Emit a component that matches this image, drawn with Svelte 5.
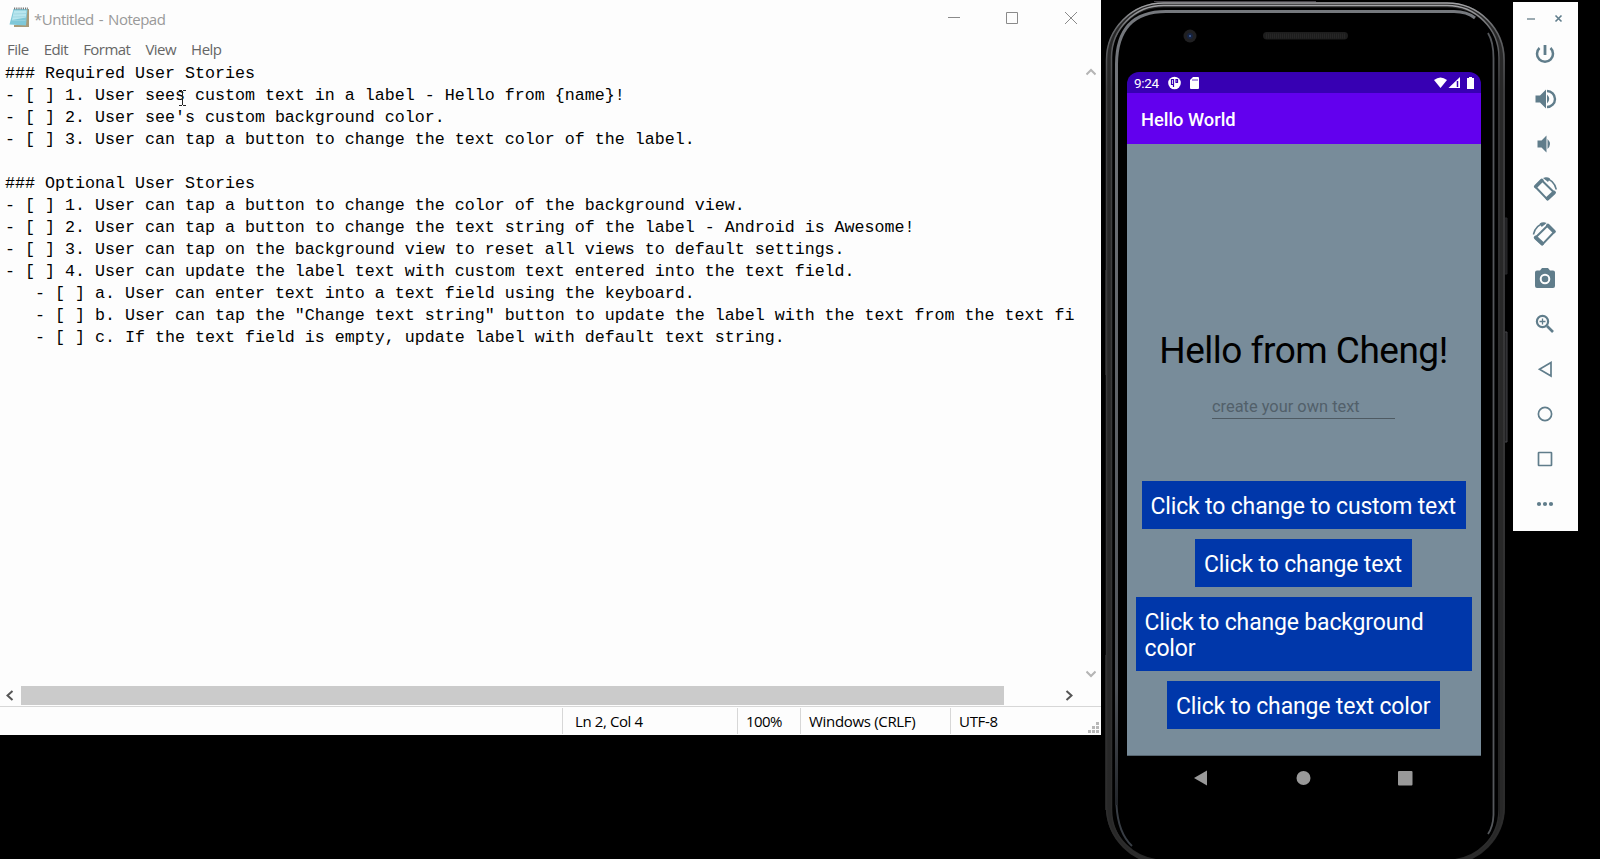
<script>
  const lines = [
    '### Required User Stories',
    '- [ ] 1. User sees custom text in a label - Hello from {name}!',
    "- [ ] 2. User see's custom background color.",
    '- [ ] 3. User can tap a button to change the text color of the label.',
    '',
    '### Optional User Stories',
    '- [ ] 1. User can tap a button to change the color of the background view.',
    '- [ ] 2. User can tap a button to change the text string of the label - Android is Awesome!',
    '- [ ] 3. User can tap on the background view to reset all views to default settings.',
    '- [ ] 4. User can update the label text with custom text entered into the text field.',
    '   - [ ] a. User can enter text into a text field using the keyboard.',
    '   - [ ] b. User can tap the "Change text string" button to update the label with the text from the text fi',
    '   - [ ] c. If the text field is empty, update label with default text string.'
  ];
  const menu = ['File', 'Edit', 'Format', 'View', 'Help'];
</script>

{#snippet rotateIcon()}
  <path d="M22.300 184.700l6.400-6.400 12.700 12.400-7.100 6.700z" stroke-linejoin="round" />
  <path d="M22.800 184.500l6-6M34.500 196.500l6.500-6" stroke-width="3.800" stroke-linecap="round" />
  <path d="M32 176.500q9 1 11.300 11" stroke-width="1.500" />
  <path d="M30 176q4-1.500 7 .5l-2 3.500z" fill="#607d8b" stroke="none" />
{/snippet}

<div class="desktop">
  <section class="notepad">
    <header class="titlebar">
      <svg class="appicon" width="22" height="22" viewBox="0 0 22 22">
        <path d="M17 2h3v18H5v-2h12z" fill="#a89a78" />
        <path d="M4.500 2h14l-1.500 16.500L.5 17.500z" fill="#7fc8d8" />
        <path d="M5 3.500h12.500l-.7 7L3 13z" fill="#b8e6ee" />
        <path d="M5 7l12-.5M4 10l12.500-.3M3 13.500l13.500 0" stroke="#9ad3df" stroke-width=".8" />
        <path d="M5 1.500h14" stroke="#777" stroke-width="2" stroke-dasharray="1.200 1" />
      </svg>
      <span class="title">*Untitled - Notepad</span>
      <svg class="controls" width="140" height="36" viewBox="0 0 140 36" fill="none" stroke="#8a8a8a">
        <path d="M8 17.500h12M66.500 12.500h11v11h-11zM125 12l12 12M137 12l-12 12" />
      </svg>
    </header>
    <nav class="menu">
      {#each menu as item}<span>{item}</span>{/each}
    </nav>
    <div class="editor">
      <div class="text">{#each lines as line}<div class="line">{line}</div>{/each}</div>
      <div class="vscroll">
        <svg width="10" height="8" viewBox="0 0 10 8"><path d="M.5 6.500L5 2l4.500 4.500" fill="none" stroke="#b5b5b5" stroke-width="2" /></svg>
        <svg width="10" height="8" viewBox="0 0 10 8"><path d="M.5 1.500L5 6l4.500-4.500" fill="none" stroke="#b5b5b5" stroke-width="2" /></svg>
      </div>
      <svg class="ibeam" width="8" height="16" viewBox="0 0 8 16"><path d="M0 .5h3M4 .5h3M3.500 1v14M0 15.500h3M4 15.500h3" stroke="#222" fill="none" /></svg>
    </div>
    <div class="hscroll">
      <svg width="21" height="19" viewBox="0 0 21 19"><path d="M12.500 5L7.500 9.500l5 4.500" fill="none" stroke="#555" stroke-width="2" /></svg>
      <div class="thumb"></div>
      <svg class="right" width="21" height="19" viewBox="0 0 21 19"><path d="M7.500 5l5 4.500-5 4.500" fill="none" stroke="#555" stroke-width="2" /></svg>
    </div>
    <footer class="status">
      <span></span><span><b class="s1">Ln 2, Col 4</b></span><span><b class="s2">100%</b></span><span><b class="s3">Windows (CRLF)</b></span><span><b class="s4">UTF-8</b></span>
      <svg class="grip" width="11" height="11" viewBox="0 0 11 11" fill="#b8b8b8"><path d="M8 0h3v3h-3zM4 4h3v3h-3zM8 4h3v3h-3zM0 8h3v3h-3zM4 8h3v3h-3zM8 8h3v3h-3z" /></svg>
    </footer>
  </section>

  <section class="phone">
    <svg class="frame" width="408" height="859" viewBox="0 0 408 859" fill="none">
      <defs>
        <linearGradient id="rim" x1="0" y1="0" x2="0" y2="1">
          <stop offset="0" stop-color="#a5a5a8" /><stop offset=".03" stop-color="#66686b" /><stop offset=".1" stop-color="#434345" /><stop offset="1" stop-color="#2b2b2b" />
        </linearGradient>
        <linearGradient id="inner" x1="0" y1="0" x2="0" y2="1">
          <stop offset="0" stop-color="#75787d" /><stop offset=".85" stop-color="#50545a" /><stop offset="1" stop-color="#22252a" />
        </linearGradient>
      </defs>
      <path d="M50 1.500h162" stroke="#48444a" />
      <path d="M1.500 270v105M1.500 655v155" stroke="#222" />
      <path d="M400.500 218h2.500v56h-2.500z" fill="#202022" stroke="#29292b" />
      <path d="M400.500 332h2.500v110h-2.500z" fill="#202022" stroke="#454549" />
      <rect x="4.500" y="5" width="394" height="857" rx="55" stroke="#282828" stroke-width="5" />
      <rect x="2.500" y="3" width="397.500" height="860" rx="57" stroke="url(#rim)" stroke-width="1.500" />
      <rect x="7.500" y="5.500" width="387.500" height="856" rx="52" stroke="url(#rim)" stroke-width="1.500" />
      <path d="M12.500 805V64Q13 11.500 62 11.500H350Q363 11.500 371 18" stroke="url(#inner)" stroke-width="3" />
      <path d="M12.500 805Q14 833 28 846" stroke="#383d44" stroke-width="2" />
      <path d="M384 33Q389.500 42 389.500 58V815Q389 827 384 834" stroke="#55585c" stroke-width="1.800" />
      <circle cx="86" cy="36" r="6.500" fill="#202022" /><circle cx="86" cy="36" r="3" fill="#16233f" /><circle cx="86" cy="36" r="1" fill="#4564a3" />
      <rect x="159" y="32" width="85" height="7.500" rx="3.700" fill="#1d1d1d" />
      <path d="M162 36h80" stroke="#262626" stroke-width="5" stroke-dasharray="1 1" />
    </svg>
    <div class="screen">
      <div class="sysbar">
        <span>9:24</span>
        <svg width="34" height="14" viewBox="0 0 34 14" fill="#fff">
          <circle cx="6.500" cy="7" r="6.300" /><path d="M5.500 3v8M5.500 3.500H3.500v5h2M8 3.500h1.500v3H8z" stroke="#3700b3" stroke-width="1.200" fill="none" />
          <path d="M25 1h5q1 0 1 1v10q0 1-1 1h-7q-1 0-1-1V4z" /><path d="M25 3v2M27 3v2M29 3v2" stroke="#3700b3" stroke-width=".8" />
        </svg>
        <svg class="signals" width="42" height="14" viewBox="0 0 42 14" fill="#fff">
          <path d="M1 4Q7.500-1 14 4L7.500 12z" /><path d="M27 1v11H15.500z" /><path d="M24.500 5v6" stroke="#3700b3" stroke-width="1.500" />
          <path d="M34 2h2V1h3v1h2v11h-7z" />
        </svg>
      </div>
      <div class="appbar">Hello World</div>
      <div class="content">
        <div class="hello">Hello from Cheng!</div>
        <div class="field">create your own text</div>
        <button class="b1">Click to change to custom text</button>
        <button class="b2">Click to change text</button>
        <button class="b3">Click to change background color</button>
        <button class="b4">Click to change text color</button>
      </div>
      <svg class="nav" width="354" height="44" viewBox="0 0 354 44" fill="#999">
        <path d="M80 14.500v15L67 22z" /><circle cx="176.500" cy="22" r="7" /><rect x="271" y="15" width="14.500" height="14.500" rx="1" />
      </svg>
    </div>
  </section>

  <aside class="tools">
    <svg width="65" height="529" viewBox="0 0 65 529" fill="none" stroke="#607d8b" stroke-width="2">
      <path d="M14 17h8" stroke="#9baab1" /><path d="M42.500 13.500l6 6M48.500 13.500l-6 6" stroke-width="1.600" />
      <path d="M32 43v10" stroke-width="2.800" /><path d="M26.500 46a8 8 0 1 0 11 0" stroke-width="2.500" />
      <g fill="#607d8b" stroke="none">
        <path d="M22.500 93.500h4.500l6-6v19l-6-6h-4.500zM34 92.500q4.500 4.500 0 9z" />
        <path d="M24.500 138.500h4l5-5v17l-5-5h-4zM34.500 137q5 5 0 10z" />
        <path d="M22 270.500q0-2 2-2h3l2-2.500h6l2 2.500h3q2 0 2 2v13.500q0 2-2 2H24q-2 0-2-2z" />
      </g>
      <path d="M34 89a8 8 0 0 1 0 16" stroke-width="2.400" />
      {@render rotateIcon()}
      <g transform="translate(63.700 45) scale(-1 1)">{@render rotateIcon()}</g>
      <circle cx="32" cy="277" r="4.300" stroke="#fdfdfd" stroke-width="2" />
      <circle cx="29.500" cy="319.500" r="5.600" stroke-width="2.200" /><path d="M34 324l6 6" stroke-width="2.700" /><path d="M26.500 319.500h6M29.500 316.500v6" stroke-width="1.300" />
      <path d="M38 360.500v13.500l-11.500-6.700z" stroke-width="1.700" /><circle cx="32" cy="412" r="6.600" stroke-width="1.700" /><rect x="25.500" y="450.500" width="13" height="13" rx=".5" stroke-width="1.700" />
      <g fill="#607d8b" stroke="none"><circle cx="26" cy="502" r="2.100" /><circle cx="32" cy="502" r="2.100" /><circle cx="38" cy="502" r="2.100" /></g>
    </svg>
  </aside>
</div>

<style>
  :global(body) { margin: 0; background: #000; }
  .desktop { width: 1600px; height: 859px; display: flex; background: #000; overflow: hidden; }
  svg { display: block; flex: none; }
  .notepad { width: 1101px; height: 735px; flex: none; background: #fdfdfd; display: flex; flex-direction: column; font-family: "Open Sans", sans-serif; }
  .titlebar { height: 36px; display: flex; align-items: center; }
  .appicon { margin-left: 9px; }
  .title { margin-left: 3px; font-size: 15px; color: #999; letter-spacing: -.5px; word-spacing: 1.6px; padding-top: 1px; white-space: nowrap; }
  .controls { margin-left: auto; margin-right: 21px; }
  .menu { height: 27px; box-sizing: border-box; padding: 0 0 2px 7px; display: flex; align-items: center; gap: 15px; font-size: 15px; letter-spacing: -.53px; color: #666; }
  .editor { height: 623px; display: flex; position: relative; }
  .text { flex: 1; padding: 0 0 0 5px; font-family: "Liberation Mono", monospace; font-size: 16.66px; color: #000; }
  .line { height: 22px; line-height: 22px; white-space: pre; }
  .vscroll { width: 15.500px; padding: 5px 0 8px; display: flex; flex-direction: column; justify-content: space-between; box-sizing: border-box; }
  .ibeam { position: absolute; left: 179px; top: 27px; }
  .hscroll { height: 19px; display: flex; }
  .thumb { width: 983px; background: #cbcbcb; }
  .right { margin-left: 55px; }
  .status { height: 28px; margin-top: 1px; border-top: 1px solid #d7d7d7; display: grid; grid-template-columns: 563px 175px 63px 150px 1fr; position: relative; font-size: 15px; }
  .status span { margin: 1px 0; border-right: 1px solid #d7d7d7; display: flex; align-items: center; }
  .status span:last-of-type { border: 0; }
  .status b { font-weight: 400; white-space: nowrap; margin-left: 8px; letter-spacing: -.6px; }
  .status .s1 { margin-left: 12px; letter-spacing: -.4px; }
  .status .s3 { letter-spacing: -.32px; }
  .status .s4 { letter-spacing: -.3px; }
  .grip { position: absolute; right: 2px; bottom: 2px; }
  .phone { width: 408px; height: 859px; margin-left: 3px; flex: none; position: relative; font-family: Roboto, sans-serif; }
  .frame { position: absolute; inset: 0; }
  .screen { position: relative; width: 354px; margin: 72px 0 0 23px; }
  .sysbar { height: 21px; padding: 0 6px 0 7px; border-radius: 12px 12px 0 0; background: #3700b3; color: #fff; display: flex; align-items: center; font-size: 13.500px; letter-spacing: -.3px; }
  .sysbar svg { margin-left: 9px; }
  .sysbar .signals { margin-left: auto; }
  .appbar { height: 51px; box-sizing: border-box; padding-left: 14px; line-height: 54px; background: #6200ee; color: #fff; font-size: 18.300px; font-weight: 500; }
  .content { height: 612px; box-sizing: border-box; padding-right: 1px; border-bottom: 1px solid #566570; background: #788c9a; display: flex; flex-direction: column; align-items: center; }
  .hello { margin-top: 185px; height: 44px; line-height: 44px; font-size: 37px; letter-spacing: -.5px; color: #000; white-space: nowrap; }
  .field { margin-top: 23px; width: 183px; height: 22px; line-height: 22px; border-bottom: 1px solid #4e5a62; font-size: 16.400px; color: #52606a; }
  button { border: 0; border-radius: 0; margin: 0 0 10px; padding: 4px 9px 0; height: 48px; background: #0037aa; color: #fff; font-family: Roboto, sans-serif; font-size: 23px; letter-spacing: -.16px; line-height: 26.500px; text-align: left; white-space: nowrap; }
  .b1 { width: 324px; margin-top: 62px; }
  .b2 { width: 217px; }
  .b3 { width: 336px; height: 74px; white-space: normal; }
  .b4 { width: 273px; }
  .tools { width: 65px; height: 529px; margin: 2px 0 0 1px; background: #fdfdfd; flex: none; }
</style>
